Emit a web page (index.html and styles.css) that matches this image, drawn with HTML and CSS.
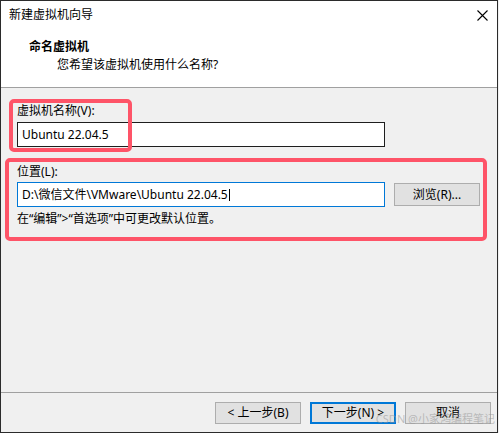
FILE: index.html
```html
<!DOCTYPE html>
<html lang="zh-CN">
<head>
  <meta charset="UTF-8">
  <title>新建虚拟机向导</title>
  <link rel="stylesheet" href="styles.css">
</head>
<body>
  <div class="window">
    <div class="header">
      <div class="titleBar">
        <span class="title">新建虚拟机向导</span>
        <svg class="closeIcon" width="11" height="11" viewBox="0 0 11 11">
          <path d="M0.5 0.5 L10.5 10.5 M10.5 0.5 L0.5 10.5" stroke="#000" stroke-width="1.1" fill="none"/>
        </svg>
      </div>
      <h2 class="heading">命名虚拟机</h2>
      <p class="subtitle">您希望该虚拟机使用什么名称?</p>
    </div>

    <div class="content">
      <label class="fieldLabel first">虚拟机名称(V):</label>
      <div class="textBox">Ubuntu 22.04.5</div>

      <label class="fieldLabel second">位置(L):</label>
      <div class="pathRow">
        <div class="textBox focused">D:\微信文件\VMware\Ubuntu 22.04.5<span class="caret"></span></div>
        <button class="btn browse">浏览(R)...</button>
      </div>
      <p class="hint">在“编辑”&gt;“首选项”中可更改默认位置。</p>
    </div>

    <div class="footer">
      <button class="btn">&lt; 上一步(B)</button>
      <button class="btn primary">下一步(N) &gt;</button>
      <button class="btn">取消</button>
    </div>

    <!-- red annotation frames drawn over the dialog -->
    <div class="mark markName"></div>
    <div class="mark markPath"></div>
    <div class="watermark">CSDN @小家鸿编程笔记</div>
  </div>
</body>
</html>
```

FILE: styles.css
```css
* {
  margin: 0;
  padding: 0;
  box-sizing: border-box;
}
html, body {
  background: #f0f0f0;
}
body {
  font-family: "Noto Sans", "Noto Sans CJK SC", sans-serif;
  font-size: 12px;
  line-height: 16px;
  color: #000;
}
.window {
  position: relative;
  width: 498px;
  height: 433px;
  border: 1px solid #2b2b2b;
  background: #f0f0f0;
  display: flex;
  flex-direction: column;
}
.header {
  height: 87px;
  background: #fff;
  border-bottom: 1px solid #a0a0a0;
}
.titleBar {
  height: 28px;
  display: flex;
  align-items: center;
  justify-content: space-between;
  padding: 0 9px 0 8px;
}
.closeIcon {
  display: block;
}
.heading {
  font-size: 12px;
  font-weight: bold;
  margin-top: 10px;
  padding-left: 28px;
}
.subtitle {
  margin-top: 2px;
  padding-left: 56px;
}
.content {
  flex: 1;
  padding: 15px 0 0 16px;
  display: flex;
  flex-direction: column;
  align-items: flex-start;
}
.fieldLabel {
  display: block;
}
.fieldLabel.first {
  margin-bottom: 3px;
}
.fieldLabel.second {
  margin-top: 17px;
  margin-bottom: 2px;
}
.textBox {
  width: 368px;
  height: 25px;
  border: 1px solid #1e1e1e;
  background: #fff;
  padding: 0 4px;
  display: flex;
  align-items: center;
  white-space: nowrap;
}
.textBox.focused {
  border-color: #0078d7;
}
.caret {
  display: inline-block;
  width: 1px;
  height: 12px;
  background: #000;
  margin-left: 1px;
}
.pathRow {
  display: flex;
  align-items: center;
  gap: 9px;
}
.btn {
  font: inherit;
  width: 86px;
  height: 22px;
  background: #e1e1e1;
  border: 1px solid #adadad;
  color: #000;
}
.btn.browse {
  height: 23px;
}
.btn.primary {
  border: 2px solid #0078d7;
}
.hint {
  margin-top: 4px;
}
.footer {
  height: 40px;
  border-top: 1px solid #a0a0a0;
  display: flex;
  justify-content: flex-end;
  gap: 9px;
  padding: 9px 6px 0 0;
}
.mark {
  position: absolute;
  border: 4px solid #fe5468;
  border-radius: 5px;
}
.markName {
  left: 8px;
  top: 98px;
  width: 123px;
  height: 53px;
}
.markPath {
  left: 4px;
  top: 157px;
  width: 482px;
  height: 83px;
}
.watermark {
  position: absolute;
  right: 2px;
  top: 410px;
  font-size: 11px;
  color: rgba(150, 150, 150, 0.55);
  white-space: nowrap;
}
```
